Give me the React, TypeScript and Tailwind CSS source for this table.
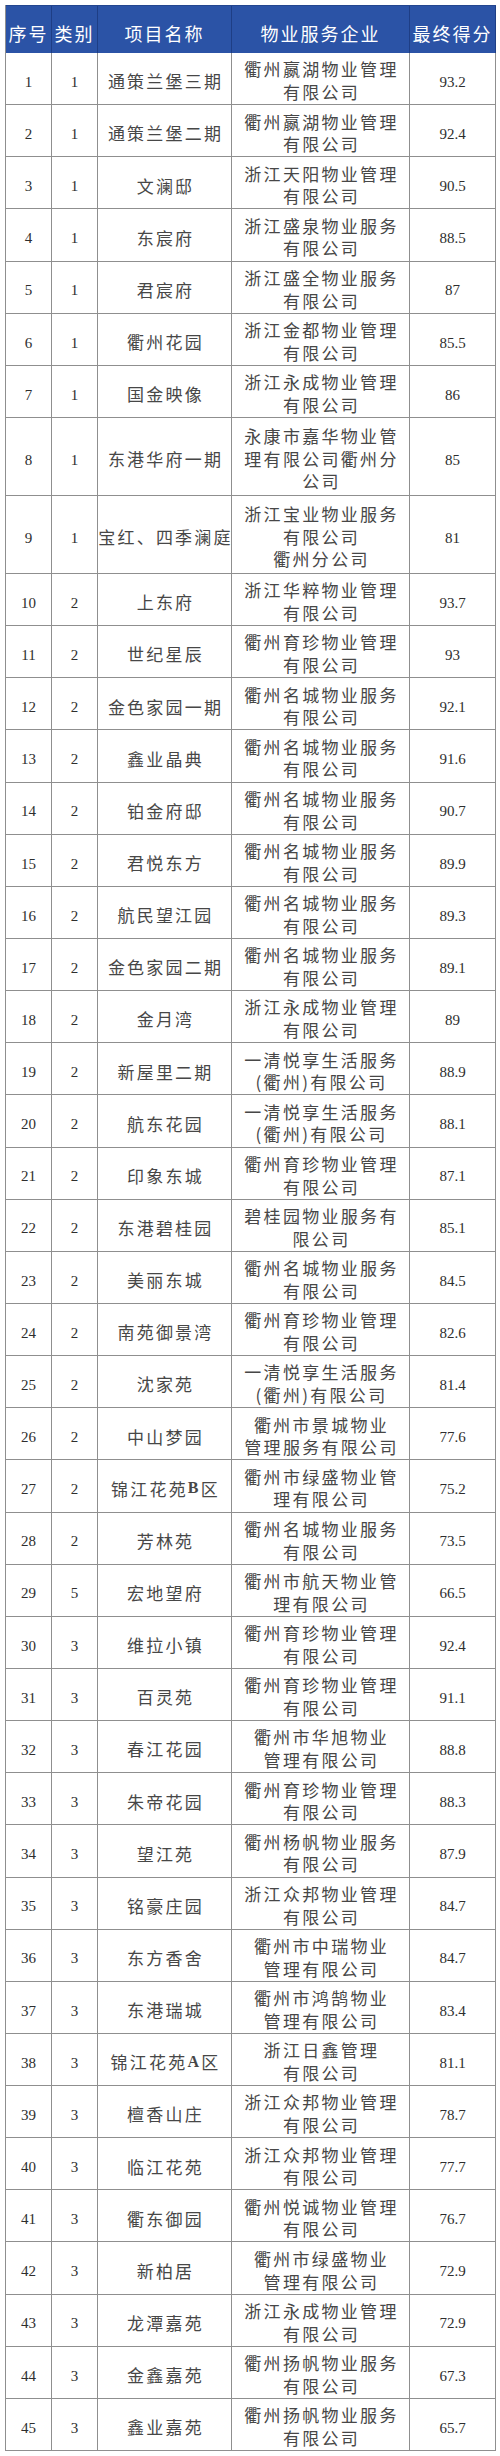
type Row = [number, number, string, string[], string]

const rows: Row[] = [
  [1, 1, "通策兰堡三期", ["衢州嬴湖物业管理", "有限公司"], "93.2"],
  [2, 1, "通策兰堡二期", ["衢州嬴湖物业管理", "有限公司"], "92.4"],
  [3, 1, "文澜邸", ["浙江天阳物业管理", "有限公司"], "90.5"],
  [4, 1, "东宸府", ["浙江盛泉物业服务", "有限公司"], "88.5"],
  [5, 1, "君宸府", ["浙江盛全物业服务", "有限公司"], "87"],
  [6, 1, "衢州花园", ["浙江金都物业管理", "有限公司"], "85.5"],
  [7, 1, "国金映像", ["浙江永成物业管理", "有限公司"], "86"],
  [8, 1, "东港华府一期", ["永康市嘉华物业管", "理有限公司衢州分", "公司"], "85"],
  [9, 1, "宝红、四季澜庭", ["浙江宝业物业服务", "有限公司", "衢州分公司"], "81"],
  [10, 2, "上东府", ["浙江华粹物业管理", "有限公司"], "93.7"],
  [11, 2, "世纪星辰", ["衢州育珍物业管理", "有限公司"], "93"],
  [12, 2, "金色家园一期", ["衢州名城物业服务", "有限公司"], "92.1"],
  [13, 2, "鑫业晶典", ["衢州名城物业服务", "有限公司"], "91.6"],
  [14, 2, "铂金府邸", ["衢州名城物业服务", "有限公司"], "90.7"],
  [15, 2, "君悦东方", ["衢州名城物业服务", "有限公司"], "89.9"],
  [16, 2, "航民望江园", ["衢州名城物业服务", "有限公司"], "89.3"],
  [17, 2, "金色家园二期", ["衢州名城物业服务", "有限公司"], "89.1"],
  [18, 2, "金月湾", ["浙江永成物业管理", "有限公司"], "89"],
  [19, 2, "新屋里二期", ["一清悦享生活服务", "(衢州)有限公司"], "88.9"],
  [20, 2, "航东花园", ["一清悦享生活服务", "(衢州)有限公司"], "88.1"],
  [21, 2, "印象东城", ["衢州育珍物业管理", "有限公司"], "87.1"],
  [22, 2, "东港碧桂园", ["碧桂园物业服务有", "限公司"], "85.1"],
  [23, 2, "美丽东城", ["衢州名城物业服务", "有限公司"], "84.5"],
  [24, 2, "南苑御景湾", ["衢州育珍物业管理", "有限公司"], "82.6"],
  [25, 2, "沈家苑", ["一清悦享生活服务", "(衢州)有限公司"], "81.4"],
  [26, 2, "中山梦园", ["衢州市景城物业", "管理服务有限公司"], "77.6"],
  [27, 2, "锦江花苑B区", ["衢州市绿盛物业管", "理有限公司"], "75.2"],
  [28, 2, "芳林苑", ["衢州名城物业服务", "有限公司"], "73.5"],
  [29, 5, "宏地望府", ["衢州市航天物业管", "理有限公司"], "66.5"],
  [30, 3, "维拉小镇", ["衢州育珍物业管理", "有限公司"], "92.4"],
  [31, 3, "百灵苑", ["衢州育珍物业管理", "有限公司"], "91.1"],
  [32, 3, "春江花园", ["衢州市华旭物业", "管理有限公司"], "88.8"],
  [33, 3, "朱帝花园", ["衢州育珍物业管理", "有限公司"], "88.3"],
  [34, 3, "望江苑", ["衢州杨帆物业服务", "有限公司"], "87.9"],
  [35, 3, "铭豪庄园", ["浙江众邦物业管理", "有限公司"], "84.7"],
  [36, 3, "东方香舍", ["衢州市中瑞物业", "管理有限公司"], "84.7"],
  [37, 3, "东港瑞城", ["衢州市鸿鹄物业", "管理有限公司"], "83.4"],
  [38, 3, "锦江花苑A区", ["浙江日鑫管理", "有限公司"], "81.1"],
  [39, 3, "檀香山庄", ["浙江众邦物业管理", "有限公司"], "78.7"],
  [40, 3, "临江花苑", ["浙江众邦物业管理", "有限公司"], "77.7"],
  [41, 3, "衢东御园", ["衢州悦诚物业管理", "有限公司"], "76.7"],
  [42, 3, "新柏居", ["衢州市绿盛物业", "管理有限公司"], "72.9"],
  [43, 3, "龙潭嘉苑", ["浙江永成物业管理", "有限公司"], "72.9"],
  [44, 3, "金鑫嘉苑", ["衢州扬帆物业服务", "有限公司"], "67.3"],
  [45, 3, "鑫业嘉苑", ["衢州扬帆物业服务", "有限公司"], "65.7"],
]

const headers = ["序号", "类别", "项目名称", "物业服务企业", "最终得分"]

// project names like "锦江花苑B区" mix a serif latin letter in
function ProjectName({ text }: { text: string }) {
  const parts = text.split(/([A-Z])/)
  return (
    <>
      {parts.map((p, i) =>
        /^[A-Z]$/.test(p) ? (
          <span key={i} className="font-['Liberation_Serif',serif] font-bold text-[16px]">
            {p}
          </span>
        ) : (
          <span key={i}>{p}</span>
        )
      )}
    </>
  )
}

export default function App() {
  return (
    <main className="min-h-screen bg-white pt-[5px] pl-[5px]">
      <div className="w-[491px] border-l border-[#8f8f8f]">
        {/* header */}
        <div className="grid grid-cols-[46px_46px_134px_178px_86px] h-[48px] bg-[#2b53a6] border-t border-[#23468f] font-['Noto_Sans_CJK_SC',sans-serif] text-[18px] tracking-[2px] text-white">
          {headers.map((h) => (
            <div
              key={h}
              className="flex items-center justify-center pt-[8px] border-r border-[#1e3e85] whitespace-nowrap"
            >
              {h}
            </div>
          ))}
        </div>

        {rows.map(([no, cat, name, company, score]) => (
          <div
            key={no}
            className={
              "grid grid-cols-[46px_46px_134px_178px_86px] border-b border-[#8f8f8f] text-[#474747] " +
              (company.length > 2 ? "h-[78px]" : "h-[52.15px]")
            }
          >
            <div className="flex items-center justify-center pt-[7px] border-r border-[#8f8f8f] font-['Liberation_Serif',serif] text-[15px] text-[#2e2e2e]">
              {no}
            </div>
            <div className="flex items-center justify-center pt-[7px] border-r border-[#8f8f8f] font-['Liberation_Serif',serif] text-[15px] text-[#2e2e2e]">
              {cat}
            </div>
            <div className="flex items-center justify-center pt-[5px] pl-[2px] border-r border-[#8f8f8f] font-['Noto_Sans_CJK_SC',sans-serif] text-[17px] tracking-[2.2px] whitespace-nowrap">
              <ProjectName text={name} />
            </div>
            <div className="flex flex-col items-center justify-center pt-[5px] pl-[2px] border-r border-[#8f8f8f] font-['Noto_Sans_CJK_SC',sans-serif] text-[17px] leading-[22.7px] tracking-[2.3px] whitespace-nowrap">
              {company.map((line, i) => (
                <span key={i}>{line}</span>
              ))}
            </div>
            <div className="flex items-center justify-center pt-[7px] border-r border-[#8f8f8f] font-['Liberation_Serif',serif] text-[15px] text-[#2e2e2e]">
              {score}
            </div>
          </div>
        ))}
      </div>
    </main>
  )
}
